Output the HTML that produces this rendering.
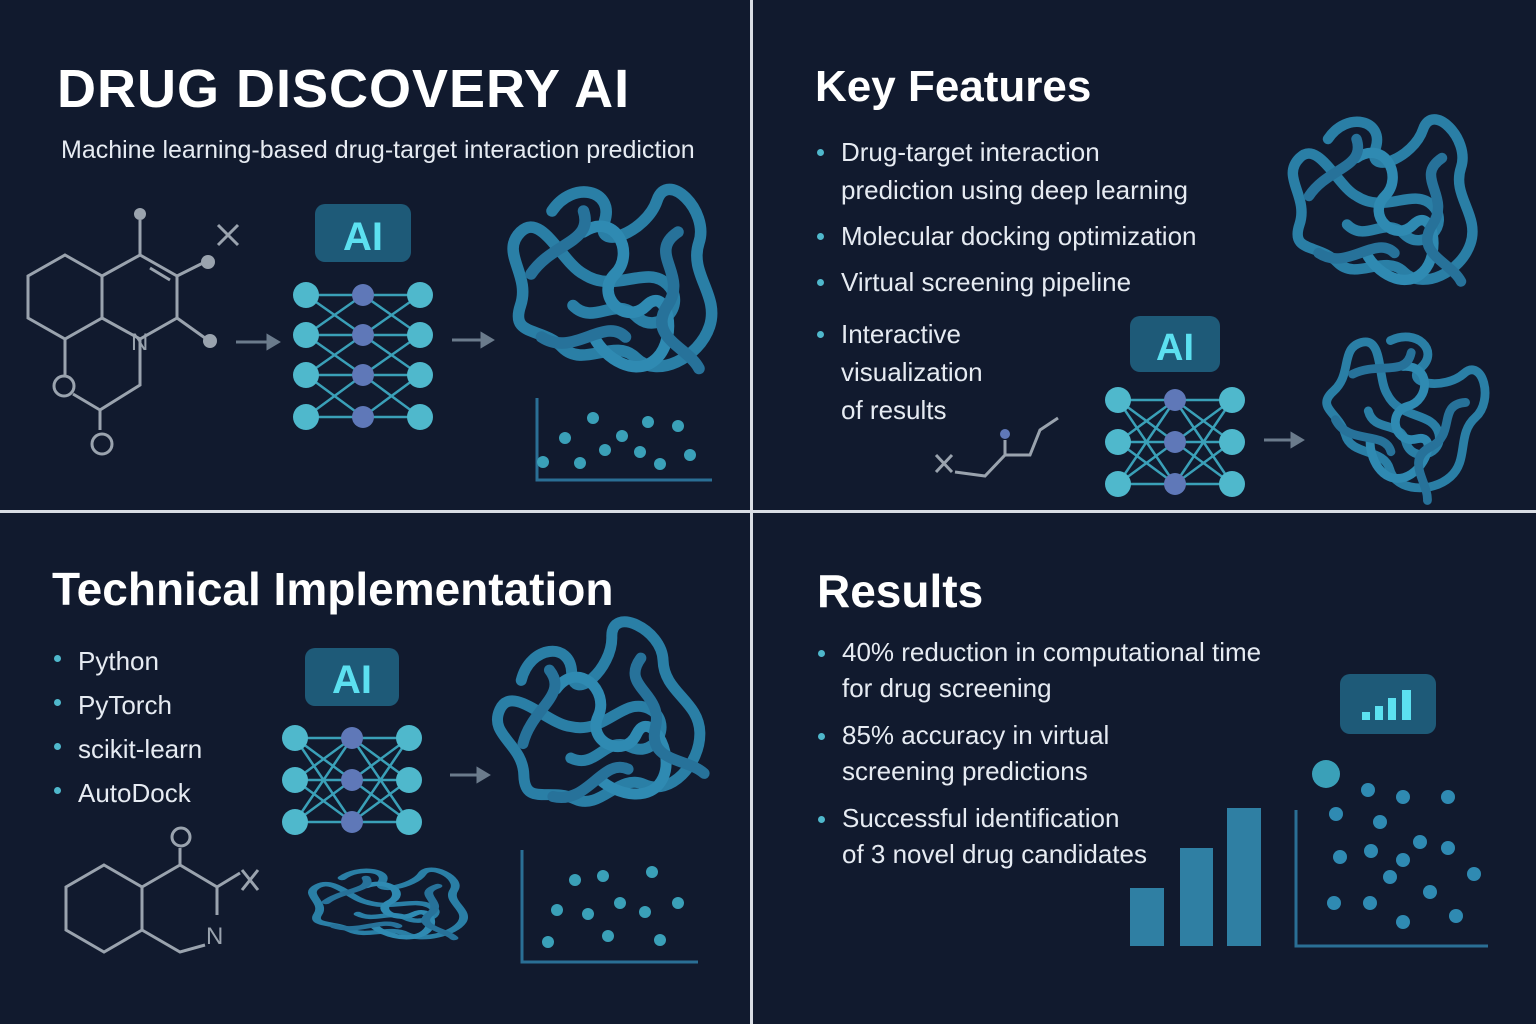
<!DOCTYPE html>
<html><head><meta charset="utf-8"><style>
html,body{margin:0;padding:0;background:#111a2e;}
body{width:1536px;height:1024px;overflow:hidden;position:relative;font-family:"Liberation Sans","DejaVu Sans",sans-serif;color:#fff}
svg{position:absolute;left:0;top:0}
.t{position:absolute;white-space:nowrap}
.h{font-weight:bold;color:#fff}
.b{color:#e6ebf2;font-size:26px;line-height:38px}
.b li{list-style:none;position:relative}
.b li:before{content:"";position:absolute;left:-24px;top:16px;width:7px;height:7px;border-radius:50%;background:#4fb8cc}
ul{margin:0;padding:0}
</style></head><body>
<svg width="1536" height="1024" viewBox="0 0 1536 1024">
<defs>
<g id="nn4">
 <g stroke="#3aa0b8" stroke-width="2.5" fill="none">
  <path d="M0 0L57 0L114 0M0 40L57 40L114 40M0 80L57 80L114 80M0 122L57 122L114 122M0 0L57 40L114 0M0 40L57 0L114 40M0 40L57 80L114 40M0 80L57 40L114 80M0 80L57 122L114 80M0 122L57 80L114 122"/>
 </g>
 <g fill="#4fb8cc"><circle cx="0" cy="0" r="13"/><circle cx="0" cy="40" r="13"/><circle cx="0" cy="80" r="13"/><circle cx="0" cy="122" r="13"/><circle cx="114" cy="0" r="13"/><circle cx="114" cy="40" r="13"/><circle cx="114" cy="80" r="13"/><circle cx="114" cy="122" r="13"/></g>
 <g fill="#5f78b8"><circle cx="57" cy="0" r="11"/><circle cx="57" cy="40" r="11"/><circle cx="57" cy="80" r="11"/><circle cx="57" cy="122" r="11"/></g>
</g>
<g id="nn3">
 <g stroke="#3aa0b8" stroke-width="2.5" fill="none">
  <path d="M0 0L57 0L114 0M0 42L57 42L114 42M0 84L57 84L114 84M0 0L57 42L114 0M0 42L57 0L114 42M0 42L57 84L114 42M0 84L57 42L114 84M0 0L57 84M0 84L57 0M57 0L114 84M57 84L114 0"/>
 </g>
 <g fill="#4fb8cc"><circle cx="0" cy="0" r="13"/><circle cx="0" cy="42" r="13"/><circle cx="0" cy="84" r="13"/><circle cx="114" cy="0" r="13"/><circle cx="114" cy="42" r="13"/><circle cx="114" cy="84" r="13"/></g>
 <g fill="#5f78b8"><circle cx="57" cy="0" r="11"/><circle cx="57" cy="42" r="11"/><circle cx="57" cy="84" r="11"/></g>
</g>
<g id="prot" fill="none" stroke="#2a7fa6" stroke-width="11" stroke-linecap="round">
 <path d="M-60 -80C-40 -110 0 -100 -10 -70C-20 -40 30 -60 40 -90C50 -120 90 -80 80 -50C70 -20 100 0 90 30C80 60 40 80 20 60C0 40 -30 70 -50 50C-70 30 -100 40 -90 10C-80 -20 -110 -40 -90 -60C-70 -80 -50 -30 -30 -20C0 0 30 -30 50 -10C70 10 40 40 20 20C0 0 -20 30 -40 10"/>
 <path d="M-30 -60C0 -80 20 -40 0 -20C-20 0 10 30 30 10C50 -10 60 40 40 60C20 80 -10 60 -20 40" stroke="#2f8ab2"/>
 <path d="M-80 -20C-60 -50 -20 -50 -30 -80M60 -60C30 -40 70 -20 50 10C30 40 70 50 80 70M-70 40C-40 60 -10 20 10 40" stroke="#27729a"/>
</g>
</defs>
<rect x="750" y="0" width="3" height="1024" fill="#d9dde4"/>
<rect x="0" y="510" width="1536" height="3" fill="#d9dde4"/>

<g stroke="#9aa3ae" stroke-width="3" fill="none">
 <path d="M65 255L102 276L102 318L65 339L28 318L28 276Z"/>
 <path d="M102 276L140 255L177 276L177 318L140 339L102 318"/>
 <path d="M140 255L140 220M177 276L205 262M177 318L205 338M140 339L140 385L100 410L100 430M65 339L65 375M73 394L100 410M150 268L170 280"/>
 <path d="M218 225L238 245M238 225L218 245"/>
</g>
<g fill="#9aa3ae"><circle cx="140" cy="214" r="6"/><circle cx="208" cy="262" r="7"/><circle cx="210" cy="341" r="7"/></g>
<text x="131" y="350" font-size="24" fill="#9aa3ae" font-family="Liberation Sans">N</text>
<circle cx="64" cy="386" r="10" stroke="#9aa3ae" stroke-width="3" fill="none"/>
<circle cx="102" cy="444" r="10" stroke="#9aa3ae" stroke-width="3" fill="none"/>
<g stroke="#6b7b8c" stroke-width="3" fill="#6b7b8c"><path d="M236 342H268"/><path d="M268 336L278 342L268 348Z"/><path d="M452 340H482"/><path d="M482 334L492 340L482 346Z"/></g>
<rect x="315" y="204" width="96" height="58" rx="10" fill="#1e5a78"/>
<text x="363" y="250" text-anchor="middle" font-size="40" font-weight="bold" fill="#5ce0f0">AI</text>
<use href="#nn4" x="306" y="295"/>
<use href="#prot" transform="translate(615,295) scale(1.05)"/>
<path d="M537 398V480H712" stroke="#2a6f95" stroke-width="3" fill="none"/>
<g fill="#3aa0b8"><circle cx="593" cy="418" r="6"/><circle cx="565" cy="438" r="6"/><circle cx="622" cy="436" r="6"/><circle cx="648" cy="422" r="6"/><circle cx="678" cy="426" r="6"/><circle cx="605" cy="450" r="6"/><circle cx="543" cy="462" r="6"/><circle cx="580" cy="463" r="6"/><circle cx="640" cy="452" r="6"/><circle cx="660" cy="464" r="6"/><circle cx="690" cy="455" r="6"/></g>

<use href="#prot" transform="translate(1385,215) scale(0.95)"/>
<use href="#prot" transform="translate(1400,420) scale(0.8) rotate(30)"/>
<rect x="1130" y="316" width="90" height="56" rx="10" fill="#1e5a78"/>
<text x="1175" y="360" text-anchor="middle" font-size="38" font-weight="bold" fill="#5ce0f0">AI</text>
<use href="#nn3" x="1118" y="400"/>
<g stroke="#6b7b8c" stroke-width="3" fill="#6b7b8c"><path d="M1264 440H1292"/><path d="M1292 434L1302 440L1292 446Z"/></g>
<g stroke="#9aa3ae" stroke-width="3" fill="none"><path d="M955 472L985 476L1005 455L1030 455L1040 430L1058 418"/><path d="M936 455L952 472M952 455L936 472"/><path d="M1005 455V440"/></g>
<circle cx="1005" cy="434" r="5" fill="#5f78b8"/>

<rect x="305" y="648" width="94" height="58" rx="10" fill="#1e5a78"/>
<text x="352" y="693" text-anchor="middle" font-size="40" font-weight="bold" fill="#5ce0f0">AI</text>
<use href="#nn3" x="295" y="738"/>
<g stroke="#6b7b8c" stroke-width="3" fill="#6b7b8c"><path d="M450 775H478"/><path d="M478 769L488 775L478 781Z"/></g>
<use href="#prot" transform="translate(605,735) scale(1.0) rotate(-20)"/>
<use href="#prot" transform="translate(390,910) scale(0.8,0.4)"/>
<path d="M522 850V962H698" stroke="#2a6f95" stroke-width="3" fill="none"/>
<g fill="#3aa0b8"><circle cx="575" cy="880" r="6"/><circle cx="603" cy="876" r="6"/><circle cx="652" cy="872" r="6"/><circle cx="557" cy="910" r="6"/><circle cx="588" cy="914" r="6"/><circle cx="620" cy="903" r="6"/><circle cx="645" cy="912" r="6"/><circle cx="678" cy="903" r="6"/><circle cx="548" cy="942" r="6"/><circle cx="608" cy="936" r="6"/><circle cx="660" cy="940" r="6"/></g>
<g stroke="#9aa3ae" stroke-width="3" fill="none">
 <path d="M104 865L142 887L142 930L104 952L66 930L66 887Z"/>
 <path d="M142 887L180 865L217 887L217 915M205 945L180 952L142 930M180 865L180 848M217 887L240 873"/>
 <path d="M242 870L258 890M258 870L242 890"/>
</g>
<circle cx="181" cy="837" r="9" stroke="#9aa3ae" stroke-width="3" fill="none"/>
<text x="206" y="944" font-size="24" fill="#9aa3ae">N</text>

<rect x="1340" y="674" width="96" height="60" rx="10" fill="#1e5a78"/>
<g fill="#5ce0f0"><rect x="1362" y="712" width="8" height="8"/><rect x="1375" y="706" width="8" height="14"/><rect x="1388" y="698" width="8" height="22"/><rect x="1402" y="690" width="9" height="30"/></g>
<g fill="#2f7fa3"><rect x="1130" y="888" width="34" height="58"/><rect x="1180" y="848" width="33" height="98"/><rect x="1227" y="808" width="34" height="138"/></g>
<path d="M1296 810V946H1488" stroke="#2a6f95" stroke-width="3" fill="none"/>
<circle cx="1326" cy="774" r="14" fill="#3aa0b8"/>
<g fill="#2f8ab2"><circle cx="1368" cy="790" r="7"/><circle cx="1403" cy="797" r="7"/><circle cx="1448" cy="797" r="7"/><circle cx="1336" cy="814" r="7"/><circle cx="1380" cy="822" r="7"/><circle cx="1420" cy="842" r="7"/><circle cx="1448" cy="848" r="7"/><circle cx="1340" cy="857" r="7"/><circle cx="1371" cy="851" r="7"/><circle cx="1403" cy="860" r="7"/><circle cx="1390" cy="877" r="7"/><circle cx="1474" cy="874" r="7"/><circle cx="1430" cy="892" r="7"/><circle cx="1334" cy="903" r="7"/><circle cx="1370" cy="903" r="7"/><circle cx="1403" cy="922" r="7"/><circle cx="1456" cy="916" r="7"/></g>
</svg>

<div class="t h" style="left:57px;top:58px;font-size:54px;letter-spacing:1px">DRUG DISCOVERY AI</div>
<div class="t" style="left:61px;top:136px;font-size:25px;color:#e6ebf2">Machine learning-based drug-target interaction prediction</div>

<div class="t h" style="left:815px;top:62px;font-size:44px">Key Features</div>
<ul class="t b" style="left:841px;top:133px">
<li>Drug-target interaction<br>prediction using deep learning</li>
<li style="margin-top:8px">Molecular docking optimization</li>
<li style="margin-top:8px">Virtual screening pipeline</li>
<li style="margin-top:14px">Interactive<br>visualization<br>of results</li>
</ul>

<div class="t h" style="left:52px;top:562px;font-size:46px">Technical Implementation</div>
<ul class="t b" style="left:78px;top:639px;line-height:44px">
<li>Python</li><li>PyTorch</li><li>scikit-learn</li><li>AutoDock</li>
</ul>

<div class="t h" style="left:817px;top:564px;font-size:46px">Results</div>
<ul class="t b" style="left:842px;top:634px;line-height:36px">
<li>40% reduction in computational time<br>for drug screening</li>
<li style="margin-top:11px">85% accuracy in virtual<br>screening predictions</li>
<li style="margin-top:11px">Successful identification<br>of 3 novel drug candidates</li>
</ul>
</body></html>
